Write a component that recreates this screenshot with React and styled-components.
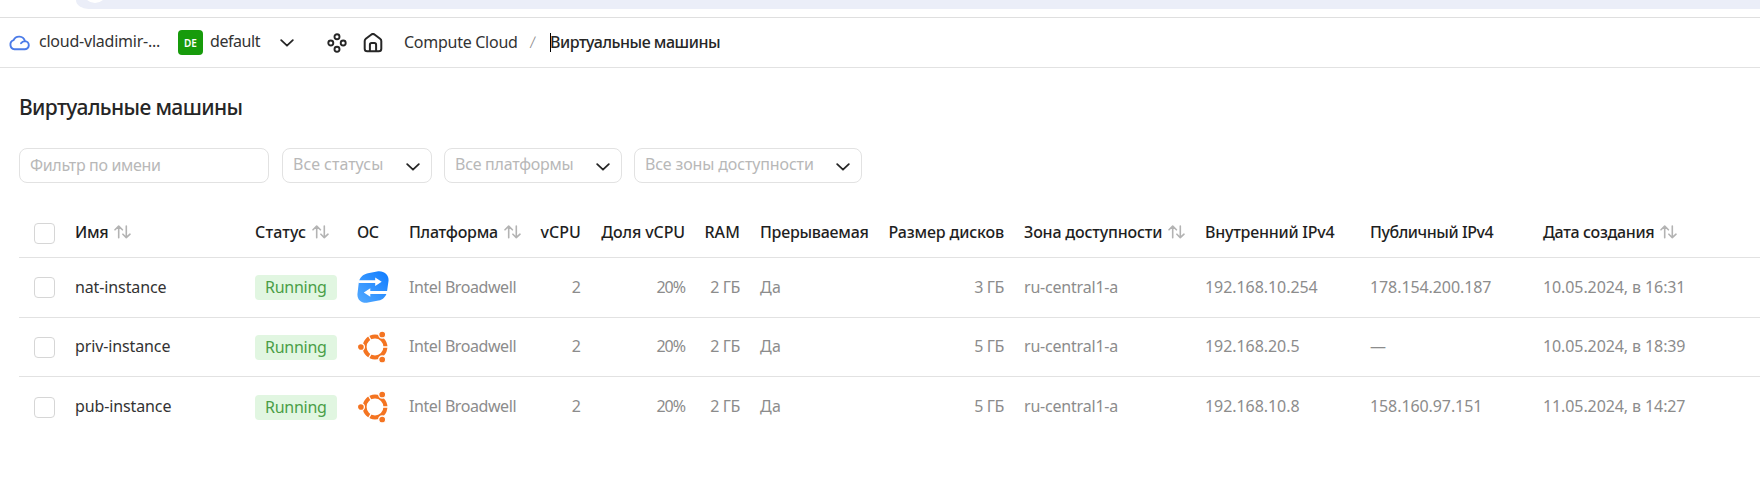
import React from 'react';
import styled, { createGlobalStyle, css } from 'styled-components';

const GlobalStyle = createGlobalStyle`
  * { box-sizing: border-box; }
  body {
    margin: 0;
    background: #fff;
    color: #262626;
    font: 16px/20px "Noto Sans", "Open Sans", sans-serif;
    overflow: hidden;
  }
  svg { display: block; flex: none; }
`;

const Page = styled.div`
  height: 501px;
  overflow: hidden;
`;

const BrowserStrip = styled.div`
  height: 18px;
  padding-left: 76px;
  border-bottom: 1px solid #dfdfdf;
`;

const AddressBar = styled.div`
  height: 9px;
  padding-left: 7px;
  overflow: hidden;
  background: #ebeef8;
  border-bottom-left-radius: 18px 13px;
`;

const SiteButton = styled.div`
  width: 24px;
  height: 24px;
  margin-top: -21px;
  border-radius: 50%;
  background: #fff;
`;

const Text = styled.span`
  white-space: nowrap;
  font-weight: ${(p) => p.$weight || 400};
  letter-spacing: ${(p) => p.$track || 0}px;
`;

const Header = styled.header`
  display: flex;
  align-items: center;
  height: 50px;
  padding-left: 8px;
  border-bottom: 1px solid #e2e2e2;
`;

const CloudName = styled(Text)`
  width: 139px;
  margin: -4px 0 0 9px;
  color: #333;
`;

const FolderBadge = styled.span`
  width: 25px;
  height: 25px;
  margin-right: 7px;
  border-radius: 4px;
  background: #179b0b;
  color: #fff;
  font: 600 10px/26px "Noto Sans", sans-serif;
  text-align: center;
`;

const FolderName = styled(Text)`
  width: 70px;
  margin-top: -4px;
  color: #333;
`;

const HeaderIcons = styled.div`
  display: flex;
  align-items: center;
  gap: 16px;
  margin: 0 21px 0 33px;
`;

const ServiceName = styled(Text)`
  width: 114px;
  margin-top: -1px;
  color: #333;
`;

const Slash = styled.span`
  width: 8px;
  margin: -1px 12px 0;
  color: #888;
  font-weight: 300;
  transform: skewX(-5deg);
`;

const Caret = styled.span`
  width: 1px;
  height: 19px;
  background: #000;
`;

const CurrentPage = styled(Text)`
  margin: -1px 0 0 -1px;
`;

const Title = styled.h1`
  margin: 26px 0 0 19px;
  font-size: 21px;
  line-height: 26px;
  font-weight: 500;
  letter-spacing: -0.62px;
`;

const Filters = styled.div`
  display: flex;
  margin: 28px 0 0 19px;
`;

const Field = styled.div`
  display: flex;
  align-items: center;
  justify-content: space-between;
  width: ${(p) => p.$width}px;
  height: 35px;
  margin-right: ${(p) => p.$after || 0}px;
  padding: 0 11px 0 10px;
  border: 1px solid #e2e2e2;
  border-radius: 8px;
  color: #b8b8b8;
  ${Text} { margin-top: -1px; }
  ${(p) => p.$select && css`
    ${Text} { margin-top: -3px; }
    svg { margin-top: 2px; }
  `}
`;

const Table = styled.div`
  margin: 25px 0 0 19px;
`;

const Row = styled.div`
  display: grid;
  grid-template-columns: 21px 160px 82px 32px 112px 40px 84px 35px 109px 115px 161px 145px 153px 160px;
  column-gap: 20px;
  align-items: center;
  height: 59.6px;
  padding-left: 15px;
  border-bottom: ${(p) => (p.$last ? 'none' : '1px solid #e2e2e2')};
  color: #8c8c8c;
`;

const HeadRow = styled(Row)`
  height: 50px;
  color: #1f1f1f;
`;

const Cell = styled.div`
  display: flex;
  align-items: center;
  justify-content: ${(p) => (p.$right ? 'flex-end' : 'flex-start')};
  gap: 6px;
  min-width: 0;
  padding-bottom: 1.1px;
`;

const NameCell = styled(Cell)`
  color: #333;
`;

const Checkbox = styled.span`
  width: 21px;
  height: 21px;
  margin-top: 1px;
  border: 1px solid #d6d6d6;
  border-radius: 4px;
`;

const Status = styled.span`
  width: 82px;
  height: 25px;
  margin-top: 1px;
  padding-left: 10px;
  border-radius: 4px;
  background: #e1f6e1;
  color: #4a9e47;
  line-height: 25px;
`;

const Chevron = () => (
  <svg width="14" height="8" viewBox="0 0 14 8" fill="none" stroke="#262626" strokeWidth="1.8" strokeLinecap="round" strokeLinejoin="round">
    <path d="M1.2 1.2 7 6.7l5.8-5.5" />
  </svg>
);

const SortIcon = () => (
  <svg width="17" height="14" viewBox="0 0 17 14" fill="none" stroke="#b3b3b3" strokeWidth="1.6" strokeLinecap="round" strokeLinejoin="round">
    <path d="M4.7 12.8V1.2M1 4.8l3.7-3.7 3.7 3.7M12.3 1v11.7M8.9 9.2l3.4 3.5L16 9.2" />
  </svg>
);

const CloudIcon = () => (
  <svg width="22" height="17" viewBox="0 0 22 17" fill="none" stroke="#4b7be8" strokeWidth="1.9" strokeLinecap="round" strokeLinejoin="round">
    <path d="M6.5 15.3h10a4.1 4.1 0 0 0 .4-8.2A6 6 0 0 0 5.6 6.2a4.7 4.7 0 0 0 .9 9.1zM13 9.3a4.7 4.7 0 0 1 3.9-2.2" />
  </svg>
);

const ServicesIcon = () => (
  <svg width="20" height="20" viewBox="0 0 20 20" fill="none" stroke="#262626" strokeWidth="1.9">
    <circle cx="10" cy="3.8" r="2.5" />
    <circle cx="10" cy="16.2" r="2.5" />
    <circle cx="3.8" cy="10" r="2.5" />
    <circle cx="16.2" cy="10" r="2.5" />
  </svg>
);

const HomeIcon = () => (
  <svg width="20" height="20" viewBox="0 0 20 20" fill="none" stroke="#262626" strokeWidth="2" strokeLinejoin="round">
    <path d="M1.7 8.1c0-1 .4-1.7 1.1-2.3l5.3-4.1a3 3 0 0 1 3.7 0l5.3 4.1c.8.6 1.2 1.3 1.2 2.3v7.6a2.6 2.6 0 0 1-2.6 2.6H4.3a2.6 2.6 0 0 1-2.6-2.6z" />
    <path d="M6.9 18v-6.2c0-1 .7-1.7 1.7-1.7h2.8c1 0 1.7.7 1.7 1.7V18" />
  </svg>
);

const NatIcon = () => (
  <svg width="32" height="32" viewBox="0 0 32 32">
    <defs>
      <linearGradient id="nat" x1="0" y1="1" x2="1" y2="0">
        <stop offset="0.1" stopColor="#4ea6ff" />
        <stop offset="0.9" stopColor="#1580ff" />
      </linearGradient>
    </defs>
    <path fill="url(#nat)" d="M11 2.2 20 .5C27-.7 32.2 4 31.5 10L30 20.5c-.7 5-4 8.3-8.5 9.1L11 31.6C4.5 32.8-.2 28.5.5 22.5L1.8 11.5C2.4 6.5 6 3.2 11 2.2z" />
    <path fill="#fff" d="M1.500 9.2h16.7V6.400l6.500 4.300-6.500 4.300v-2.900H1.500zM32 20H13.300v-2.800l-6.500 4.300 6.500 4.300V22.900H32z" />
  </svg>
);

const UbuntuIcon = () => (
  <svg width="32" height="32" viewBox="0 0 32 32">
    <circle cx="18" cy="16" r="10.4" fill="none" stroke="#f47421" strokeWidth="4" />
    <path stroke="#fff" strokeWidth="1.3" d="M18 16h14M18 16 11 3.9M18 16 11 28.1" />
    <g fill="#f47421" stroke="#fff" strokeWidth="1.3">
      <circle cx="3.9" cy="16" r="3.5" />
      <circle cx="25.2" cy="3.5" r="3.5" />
      <circle cx="25.2" cy="28.5" r="3.5" />
    </g>
  </svg>
);

const columns = [
  { title: 'Имя', track: -0.3, sort: true },
  { title: 'Статус', track: 0.12, sort: true },
  { title: 'ОС', track: -0.5 },
  { title: 'Платформа', track: -0.25, sort: true },
  { title: 'vCPU', track: 0.1, right: true },
  { title: 'Доля vCPU', track: -0.12, right: true },
  { title: 'RAM', track: 0.1, right: true },
  { title: 'Прерываемая', track: -0.26 },
  { title: 'Размер дисков', track: -0.15, right: true },
  { title: 'Зона доступности', track: -0.18, sort: true },
  { title: 'Внутренний IPv4', track: -0.24 },
  { title: 'Публичный IPv4', track: -0.44 },
  { title: 'Дата создания', track: -0.33, sort: true },
];

const machines = [
  { name: 'nat-instance', Icon: NatIcon, disk: '3 ГБ', inner: '192.168.10.254', outer: '178.154.200.187', created: '10.05.2024, в 16:31' },
  { name: 'priv-instance', Icon: UbuntuIcon, disk: '5 ГБ', inner: '192.168.20.5', outer: '—', created: '10.05.2024, в 18:39' },
  { name: 'pub-instance', Icon: UbuntuIcon, disk: '5 ГБ', inner: '192.168.10.8', outer: '158.160.97.151', created: '11.05.2024, в 14:27' },
];

export default function App() {
  return (
    <Page>
      <GlobalStyle />
      <BrowserStrip>
        <AddressBar><SiteButton /></AddressBar>
      </BrowserStrip>
      <Header>
        <CloudIcon />
        <CloudName $track={-0.23}>cloud-vladimir-...</CloudName>
        <FolderBadge>DE</FolderBadge>
        <FolderName $track={-0.45}>default</FolderName>
        <Chevron />
        <HeaderIcons>
          <ServicesIcon />
          <HomeIcon />
        </HeaderIcons>
        <ServiceName $track={-0.27}>Compute Cloud</ServiceName>
        <Slash>/</Slash>
        <Caret />
        <CurrentPage $weight={500} $track={-0.48}>Виртуальные машины</CurrentPage>
      </Header>
      <Title>Виртуальные машины</Title>
      <Filters>
        <Field $width={250} $after={13}><Text $track={-0.34}>Фильтр по имени</Text></Field>
        <Field $select $width={150} $after={12}><Text>Все статусы</Text><Chevron /></Field>
        <Field $select $width={178} $after={12}><Text $track={-0.25}>Все платформы</Text><Chevron /></Field>
        <Field $select $width={228}><Text $track={-0.14}>Все зоны доступности</Text><Chevron /></Field>
      </Filters>
      <Table>
        <HeadRow>
          <Checkbox />
          {columns.map((c) => (
            <Cell key={c.title} $right={c.right}>
              <Text $weight={500} $track={c.track}>{c.title}</Text>
              {c.sort && <SortIcon />}
            </Cell>
          ))}
        </HeadRow>
        {machines.map((m, i) => (
          <Row key={m.name} $last={i === machines.length - 1}>
            <Checkbox />
            <NameCell><Text $track={-0.12}>{m.name}</Text></NameCell>
            <Status><Text $track={-0.27}>Running</Text></Status>
            <m.Icon />
            <Cell><Text $track={-0.42}>Intel Broadwell</Text></Cell>
            <Cell $right><Text>2</Text></Cell>
            <Cell $right><Text $track={-1}>20%</Text></Cell>
            <Cell $right><Text $track={-0.4}>2 ГБ</Text></Cell>
            <Cell><Text $track={0.34}>Да</Text></Cell>
            <Cell $right><Text $track={-0.4}>{m.disk}</Text></Cell>
            <Cell><Text $track={-0.2}>ru-central1-a</Text></Cell>
            <Cell><Text $track={-0.06}>{m.inner}</Text></Cell>
            <Cell><Text $track={-0.09}>{m.outer}</Text></Cell>
            <Cell><Text $track={-0.1}>{m.created}</Text></Cell>
          </Row>
        ))}
      </Table>
    </Page>
  );
}
